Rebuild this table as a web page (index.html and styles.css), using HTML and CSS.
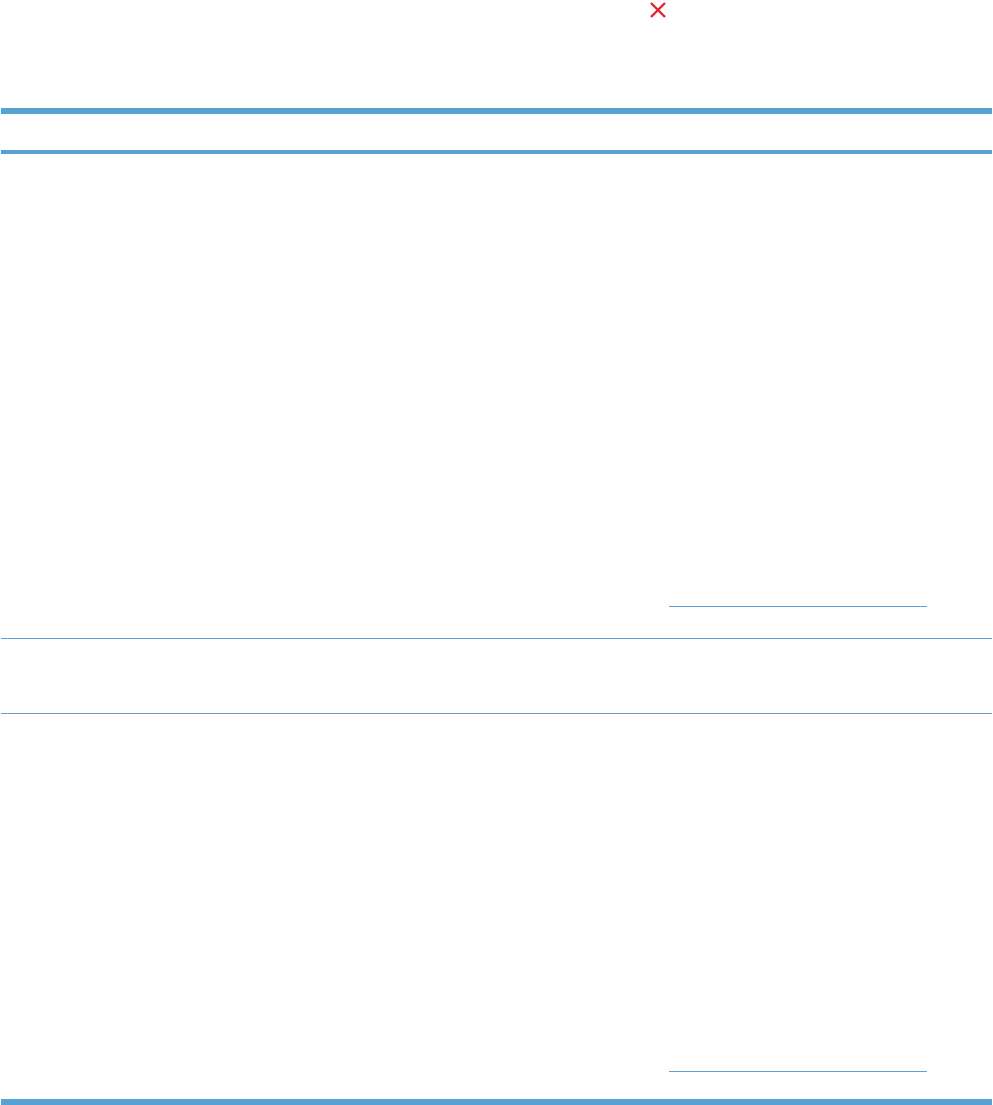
FILE: index.html
```html
<!DOCTYPE html>
<html>
<head>
<meta charset="utf-8">
<link rel="stylesheet" href="styles.css">
</head>
<body>
<div class="page">
  <div class="top">
    <svg class="x-icon" width="18" height="18" viewBox="0 0 18 18"><path d="M2 2 L16 16 M16 2 L2 16" stroke="#e8212b" stroke-width="2.4" fill="none"/></svg>
  </div>
  <div class="table">
    <div class="row head">
      <div class="cell c1"></div>
      <div class="cell c2"></div>
    </div>
    <div class="row r1">
      <div class="cell c1"></div>
      <div class="cell c2 end"><a class="link" href="#"></a></div>
    </div>
    <div class="row r2">
      <div class="cell c1"></div>
      <div class="cell c2"></div>
    </div>
    <div class="row r3">
      <div class="cell c1"></div>
      <div class="cell c2 end"><a class="link" href="#"></a></div>
    </div>
  </div>
</div>
</body>
</html>
```
FILE: styles.css
```css
html, body {
  margin: 0;
  padding: 0;
  background: #ffffff;
  font-family: "Liberation Sans", Arial, sans-serif;
}
.page {
  width: 991px;
  padding-left: 1px;
}
.top {
  height: 108px;
  display: flex;
  align-items: flex-start;
  padding-left: 648px;
  box-sizing: border-box;
  padding-top: 1px;
}
.x-icon {
  display: block;
}
.table {
  border-top: 6px solid #58a1d4;
  border-bottom: 6px solid #58a1d4;
}
.row {
  display: grid;
  grid-template-columns: 330px 1fr;
}
.head {
  height: 36px;
  border-bottom: 4px solid #58a1d4;
}
.r1 {
  height: 484px;
  border-bottom: 1px solid #58a1d4;
}
.r2 {
  height: 74px;
  border-bottom: 1px solid #58a1d4;
}
.r3 {
  height: 385px;
}
.cell.end {
  display: flex;
  flex-direction: column;
  justify-content: flex-end;
}
.r1 .end { padding-bottom: 31px; }
.r3 .end { padding-bottom: 27px; }
.link {
  display: block;
  margin-left: 338px;
  width: 258px;
  height: 0;
  border-bottom: 1px solid #58a1d4;
}
```
